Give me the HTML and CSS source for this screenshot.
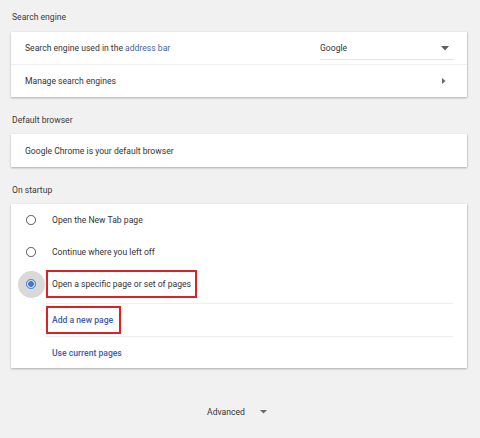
FILE: index.html
```html
<!DOCTYPE html>
<html>
<head>
<meta charset="utf-8">
<link rel="stylesheet" href="styles.css">
</head>
<body>
<div class="page">
  <div class="label first">Search engine</div>
  <div class="card">
    <div class="row">
      <span class="grow">Search engine used in the <span class="link">address bar</span></span>
      <div class="select">
        <span>Google</span>
        <svg class="caret" width="8" height="5" viewBox="0 0 8 5"><path d="M0 0h8L4 4.5z" fill="#5f5f5f"/></svg>
      </div>
    </div>
    <div class="row divided">
      <span class="grow">Manage search engines</span>
      <svg class="arrow" width="4" height="6" viewBox="0 0 4 6"><path d="M0 0l3.5 3L0 6z" fill="#6a6a6a"/></svg>
    </div>
  </div>

  <div class="label">Default browser</div>
  <div class="card">
    <div class="row single">Google Chrome is your default browser</div>
  </div>

  <div class="label">On startup</div>
  <div class="card startup">
    <div class="radio-row">
      <span class="radio"></span>
      <span class="text">Open the New Tab page</span>
    </div>
    <div class="radio-row">
      <span class="radio"></span>
      <span class="text">Continue where you left off</span>
    </div>
    <div class="radio-row">
      <span class="radio checked"></span>
      <span class="text marked">Open a specific page or set of pages</span>
    </div>
    <div class="pages">
      <div class="page-row first-page"><span class="action marked">Add a new page</span></div>
      <div class="page-row"><span class="action">Use current pages</span></div>
    </div>
  </div>

  <div class="advanced">
    <span>Advanced</span>
    <svg width="7" height="4" viewBox="0 0 7 4"><path d="M0 0h7L3.5 3.5z" fill="#6a6a6a"/></svg>
  </div>
</div>
</body>
</html>
```

FILE: styles.css
```css
html, body {
  margin: 0;
  padding: 0;
  background: #f1f1f1;
}
body {
  font-family: Roboto, "Liberation Sans", Arial, sans-serif;
  font-size: 8.6px;
  color: #333;
  width: 480px;
  height: 438px;
  overflow: hidden;
}
.page {
  padding: 0 13px 0 11px;
}
.label {
  padding: 9px 0 0 1px;
  height: 28px;
  line-height: 28px;
  color: #3a3a3a;
}
.label.first {
  padding-top: 2px;
  height: 30px;
  line-height: 30px;
}
.card {
  background: #fff;
  box-shadow: 0 1px 2px rgba(0, 0, 0, 0.28), 1px 0 1px rgba(0, 0, 0, 0.06);
}
.row {
  display: flex;
  align-items: center;
  height: 32px;
  padding: 0 14px 0 14px;
}
.row.divided {
  border-top: 1px solid #efefef;
}
.row.single {
  height: 33px;
}
.grow {
  flex: 1;
}
.link {
  color: #4a5f9c;
}
.select {
  width: 133px;
  height: 22px;
  margin-top: 1px;
  box-sizing: border-box;
  border-bottom: 1px solid #e3e3e3;
  display: flex;
  align-items: center;
  justify-content: space-between;
  padding: 0 4px 0 0;
}
.arrow {
  margin-right: 7px;
}
.startup {
  padding: 0 14px 0 0;
}
.radio-row {
  display: flex;
  align-items: center;
  height: 32px;
}
.radio {
  width: 27px;
  height: 27px;
  margin: 0 1.5px 0 6.5px;
  border-radius: 50%;
  display: flex;
  align-items: center;
  justify-content: center;
  flex-shrink: 0;
}
.radio::before {
  content: "";
  width: 7.5px;
  height: 7.5px;
  border: 1.9px solid #555;
  border-radius: 50%;
}
.radio.checked {
  background: #d9d9d9;
}
.radio.checked::before {
  border-color: #3f78d8;
  background: radial-gradient(circle, #3f78d8 0 2.6px, transparent 3.1px);
}
.text {
  padding: 0 4px 0 4px;
  line-height: 24px;
  border: 2px solid transparent;
}
.text.marked, .action.marked {
  border-color: #d8232a;
}
.pages {
  margin: 3px 0 0 35px;
  border-top: 1px solid #eeeeee;
}
.page-row {
  display: flex;
  align-items: center;
  height: 32px;
}
.page-row.first-page {
  border-bottom: 1px solid #eeeeee;
}
.page-row + .page-row {
  height: 31px;
}
.action {
  color: #3c5ba8;
  font-weight: 500;
  padding: 0 6px 0 4px;
  line-height: 24px;
  border: 2px solid transparent;
}
.advanced {
  display: flex;
  align-items: center;
  justify-content: center;
  gap: 15px;
  margin-top: 39px;
  padding-right: 4px;
  color: #333;
}
```
